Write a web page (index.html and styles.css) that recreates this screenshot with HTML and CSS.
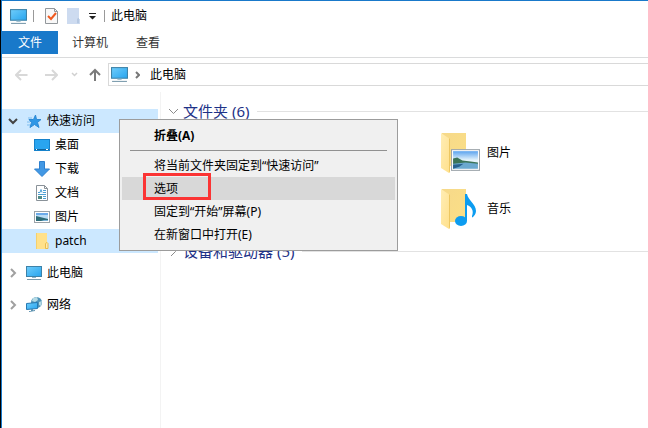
FILE: index.html
```html
<!DOCTYPE html>
<html lang="zh-CN">
<head>
    <meta charset="UTF-8">
    <meta name="viewport" content="width=device-width, initial-scale=1.0">
    <title>此电脑</title>
    <link rel="stylesheet" href="styles.css">
</head>
<body>
    <svg class="sprite" aria-hidden="true">
        <defs>
            <linearGradient id="screen" x1="0" y1="0" x2="1" y2="1">
                <stop offset="0" stop-color="#6fcdfb"/>
                <stop offset="1" stop-color="#27a4ee"/>
            </linearGradient>
            <linearGradient id="paper" x1="0" y1="0" x2="1" y2="1">
                <stop offset="0" stop-color="#f6d98a"/>
                <stop offset="1" stop-color="#fbdf86"/>
            </linearGradient>
            <linearGradient id="flap" x1="0" y1="0" x2="1" y2="1">
                <stop offset="0" stop-color="#ffedb5"/>
                <stop offset="1" stop-color="#ffe08a"/>
            </linearGradient>
            <linearGradient id="sky" x1="0" y1="0" x2="0" y2="1">
                <stop offset="0" stop-color="#5ba3ee"/>
                <stop offset="0.5" stop-color="#e4f3fb"/>
            </linearGradient>
            <symbol id="pc" viewBox="0 0 16 16">
                <rect x="0.5" y="1.5" width="15" height="10" fill="url(#screen)" stroke="#3d82a8"/>
                <path d="M6 12h4v1H6z" fill="#8fb4c8"/>
                <path d="M1 14h14v1H1z" fill="#7899ab"/>
            </symbol>
            <symbol id="photo" viewBox="0 0 28 21">
                <rect x="0.5" y="0.5" width="27" height="20" fill="#fff" stroke="#9ba3a9"/>
                <rect x="2" y="2" width="24" height="17" fill="url(#sky)"/>
                <path d="M2 9l4-1 5 3 8 1 7 1v2H2z" fill="#3b7458"/>
                <path d="M2 14l12-1 12 1v5H2z" fill="#6ba9cf"/>
                <path d="M2 15l10-1-4 3-6 2z" fill="#28628f"/>
            </symbol>
            <symbol id="folder" viewBox="0 0 26 42">
                <path d="M1 1h24v33H9L1 36z" fill="url(#paper)"/>
                <path d="M0 1l9 6v33l-1 1-8-5z" fill="url(#flap)"/>
                <path d="M9 7v32l-1 2V6z" fill="#edc762"/>
            </symbol>
        </defs>
    </svg>

    <div class="window">
        <header class="titlebar">
            <svg class="pc-icon"><use href="#pc"/></svg>
            <span class="divider"></span>
            <button class="tool-btn" aria-label="属性">
                <svg width="13" height="16" viewBox="0 0 13 16">
                    <path d="M0.5 0.5h9l3 3v12h-12z" fill="#f8f8f8" stroke="#92979b"/>
                    <path d="M9.5 0.5v3h3" fill="none" stroke="#92979b"/>
                    <path d="M3 8l3 3 5-6" fill="none" stroke="#ef5a20" stroke-width="2"/>
                </svg>
            </button>
            <button class="tool-btn" aria-label="新建文件夹">
                <svg width="13" height="16" viewBox="0 0 13 16">
                    <path d="M0 0h12v11h1v5H0z" fill="#cddbf0"/>
                    <path d="M10.5 15v-4l1-1v5z" fill="#e3ecf8" stroke="#b5c8e2"/>
                </svg>
            </button>
            <button class="tool-btn small" aria-label="自定义快速访问工具栏">
                <svg width="7" height="7" viewBox="0 0 7 7"><path d="M0 0h7v1H0zM0 3h7L3.5 6.5z" fill="#222"/></svg>
            </button>
            <span class="divider"></span>
            <h1>此电脑</h1>
        </header>

        <nav class="tabs">
            <button class="tab active">文件</button>
            <button class="tab">计算机</button>
            <button class="tab">查看</button>
        </nav>

        <div class="navbar">
            <button class="arrow" aria-label="后退" disabled>
                <svg width="13" height="12" viewBox="0 0 13 12"><path d="M12.5 6H1.5M6 1L1 6l5 5" fill="none" stroke="#d8d8d8" stroke-width="2"/></svg>
            </button>
            <button class="arrow" aria-label="前进" disabled>
                <svg width="13" height="12" viewBox="0 0 13 12"><path d="M0 6h11.5M7 1l5 5-5 5" fill="none" stroke="#d8d8d8" stroke-width="2"/></svg>
            </button>
            <button class="arrow narrow" aria-label="最近浏览的位置" disabled>
                <svg width="7" height="5" viewBox="0 0 7 5"><path d="M1 1l2.5 2.5L6 1" fill="none" stroke="#d0d0d0" stroke-width="1.5"/></svg>
            </button>
            <button class="arrow up" aria-label="上移">
                <svg width="12" height="13" viewBox="0 0 12 13"><path d="M6 13V2M1 7l5-5 5 5" fill="none" stroke="#7b7b7b" stroke-width="2"/></svg>
            </button>
            <div class="address">
                <svg class="pc-icon"><use href="#pc"/></svg>
                <svg width="5" height="8" viewBox="0 0 5 8"><path d="M1 1l3 3-3 3" fill="none" stroke="#777" stroke-width="2"/></svg>
                <span>此电脑</span>
            </div>
        </div>

        <div class="body">
            <aside class="sidebar">
                <a class="root selected" href="#">
                    <svg class="chevron" width="10" height="10" viewBox="0 0 10 10"><path d="M1 3l4 4 4-4" fill="none" stroke="#444" stroke-width="2"/></svg>
                    <svg class="icon" viewBox="0 0 16 16">
                        <path d="M9.5 2l1 4.500H15l-3.500 3 1.500 5-4.500-3-4.500 3 1.500-5L3 6.500h4.500z" fill="#2f97e6" stroke="#2c8ad6"/>
                        <path d="M2 5h4M1 9h3M1 12h3" stroke="#7dbdf0"/>
                    </svg>
                    快速访问
                </a>
                <a class="child" href="#">
                    <svg class="icon" viewBox="0 0 16 16">
                        <rect x="0.5" y="2.5" width="15" height="11" fill="#29a5f0" stroke="#1682cb"/>
                        <path d="M1 12h14v1H1z" fill="#12639b"/>
                        <path d="M2 12h1v1H2zM12 12h2v1h-2z" fill="#fff"/>
                    </svg>
                    桌面
                </a>
                <a class="child" href="#">
                    <svg class="icon" viewBox="0 0 16 16"><path d="M5.5 0.5h5V8h5L8 15.5 0.5 8h5z" fill="#4298e4" stroke="#2d80cf"/></svg>
                    下载
                </a>
                <a class="child" href="#">
                    <svg class="icon" viewBox="0 0 16 16">
                        <path d="M2.5 0.5h8l3 3v12h-11z" fill="#fff" stroke="#8a9299"/>
                        <path d="M10.5 0.5v3h3" fill="none" stroke="#8a9299"/>
                        <path d="M4 7.5h2l1-3 1 3M9 5.5h3M9 7.5h3M4 9.5h8M9 11.5h3M9 13.5h3" fill="none" stroke="#4da0d4"/>
                        <path d="M4 11h4v3H4z" fill="#508b86"/>
                    </svg>
                    文档
                </a>
                <a class="child" href="#">
                    <svg class="icon" viewBox="0 0 16 16">
                        <rect x="0.5" y="2.5" width="15" height="11" fill="#fff" stroke="#9ba3a9"/>
                        <path d="M2 4h12v8H2z" fill="#b9dcf5"/>
                        <path d="M2 4h12v2H2z" fill="#6cabea"/>
                        <path d="M2 7l4 1 8 2v2H2z" fill="#2f6d78"/>
                        <path d="M7 12l3-1h4v1z" fill="#7db4d8"/>
                    </svg>
                    图片
                </a>
                <a class="child selected" href="#">
                    <svg class="icon" viewBox="0 0 16 16">
                        <path d="M2 0h11v9l1 1v6H2z" fill="#ffe18a"/>
                        <path d="M2 0h1v16H2z" fill="#f5d06d"/>
                        <path d="M11.5 15.5v-5l1.5-1 1 1v5z" fill="#ffeab0" stroke="#e9bd4c"/>
                    </svg>
                    patch
                </a>
                <a class="root spaced" href="#">
                    <svg class="chevron" width="10" height="10" viewBox="0 0 10 10"><path d="M3 1l4 4-4 4" fill="none" stroke="#a0a0a0" stroke-width="2"/></svg>
                    <svg class="icon"><use href="#pc"/></svg>
                    此电脑
                </a>
                <a class="root spaced" href="#">
                    <svg class="chevron" width="10" height="10" viewBox="0 0 10 10"><path d="M3 1l4 4-4 4" fill="none" stroke="#a0a0a0" stroke-width="2"/></svg>
                    <svg class="icon" viewBox="0 0 16 16">
                        <circle cx="10.5" cy="5.5" r="5.5" fill="#4f93b8"/>
                        <path d="M7 1l4-1 1 3-3 2-3-1zM13 5l3-1-1 5-2-1z" fill="#b4dae5"/>
                        <path d="M0.5 6.5l11-1v6l-11 1z" fill="url(#screen)" stroke="#2779b2"/>
                        <path d="M5 12h2v2H5zM3 14l6-1v1l-6 1z" fill="#5d92b0"/>
                    </svg>
                    网络
                </a>
            </aside>

            <main class="content">
                <h2>
                    <svg width="11" height="7" viewBox="0 0 11 7"><path d="M1 1l4.5 4.5L10 1" fill="none" stroke="#8b8b8b"/></svg>
                    文件夹 (6)
                </h2>
                <div class="folders">
                    <a class="folder" href="#">
                        <svg width="40" height="42" viewBox="0 0 40 42">
                            <use href="#folder" width="26" height="42"/>
                            <use href="#photo" x="10" y="17" width="29" height="22"/>
                        </svg>
                        图片
                    </a>
                    <a class="folder" href="#">
                        <svg width="40" height="42" viewBox="0 0 40 42">
                            <use href="#folder" width="26" height="42"/>
                            <ellipse cx="20" cy="33" rx="6" ry="5" fill="#0c9cf0"/>
                            <path d="M24 6h2c1 6 9 10 9 17 0 3-2 5-3 6-1 1-1 0-1-1 2-5 0-9-5-11v16h-2z" fill="#0c9cf0"/>
                        </svg>
                        音乐
                    </a>
                </div>
                <h2>
                    <svg width="11" height="11" viewBox="0 0 11 11"><path d="M3 1l4.5 4.5L3 10" fill="none" stroke="#8b8b8b"/></svg>
                    设备和驱动器 (5)
                </h2>
            </main>
        </div>

        <!-- 右键菜单 -->
        <div class="context-menu" role="menu">
            <button class="default" role="menuitem">折叠(A)</button>
            <hr>
            <button role="menuitem">将当前文件夹固定到“快速访问”</button>
            <button class="hover" role="menuitem">选项<span class="marker"></span></button>
            <button role="menuitem">固定到“开始”屏幕(P)</button>
            <button role="menuitem">在新窗口中打开(E)</button>
        </div>
    </div>
</body>
</html>
```
FILE: styles.css
```css
* {
    box-sizing: border-box;
}
body {
    margin: 0;
    padding-left: 1px;
    background: #000;
    color: #000;
    font-family: "Noto Sans", "Noto Sans CJK SC", sans-serif;
    font-size: 12px;
    line-height: 16px;
}
button {
    font: inherit;
    color: inherit;
    background: none;
    border: none;
    padding: 0;
}
a {
    color: inherit;
    text-decoration: none;
}
svg {
    display: block;
    flex: none;
}
.sprite {
    position: absolute;
    width: 0;
    height: 0;
}
.window {
    position: relative;
    display: flex;
    flex-direction: column;
    min-height: 100vh;
    background: white;
    border-top: 1px solid #1979ca;
    border-left: 1px solid #1979ca;
    overflow: hidden;
}
.icon {
    width: 16px;
    height: 16px;
}
.pc-icon {
    width: 17px;
    height: 17px;
}

/* 标题栏 */
.titlebar {
    display: flex;
    align-items: center;
    height: 30px;
    padding-left: 8px;
}
.divider {
    width: 1px;
    height: 12px;
    margin: 0 11px 0 6px;
    background: #999;
}
.tool-btn {
    margin-right: 9px;
}
.tool-btn.small {
    margin-right: 2px;
}
.tool-btn + .divider {
    margin-right: 6px;
}
h1 {
    margin: 0;
    font-size: 12px;
    font-weight: normal;
}

/* 选项卡 */
.tabs {
    display: flex;
    height: 27px;
    border-bottom: 1px solid #dadbdc;
}
.tab {
    height: 23px;
    padding: 0 14px;
    color: #333;
}
.tab.active {
    padding: 0 16px;
    background: #1979ca;
    color: white;
}

/* 地址栏 */
.navbar {
    display: flex;
    align-items: center;
    padding: 5px 0 0 13px;
}
.arrow {
    margin-right: 17px;
}
.arrow.narrow {
    margin: 0 11px 0 -4px;
}
.arrow.up {
    margin-right: 7px;
}
.address {
    display: flex;
    flex: 1;
    align-items: center;
    height: 23px;
    padding-left: 2px;
    border: 1px solid #d9d9d9;
    border-right: none;
    gap: 7px;
}
.address span {
    margin-left: 3px;
}

/* 导航窗格和内容 */
.body {
    display: flex;
    flex: 1;
    padding-top: 6px;
}
.sidebar {
    width: 159px;
    padding-top: 17px;
    padding-right: 2px;
    border-right: 1px solid #f3f3f3;
}
.sidebar a {
    display: flex;
    align-items: center;
    height: 24px;
    gap: 5px;
}
.sidebar .root {
    padding-left: 6px;
}
.sidebar .child {
    padding-left: 32px;
}
.sidebar .chevron {
    margin-right: 3px;
}
.sidebar .spaced {
    margin-top: 8px;
}
.sidebar .selected {
    background: #cce8ff;
}
.content {
    flex: 1;
    padding: 9px 0 0 7px;
}
h2 {
    display: flex;
    align-items: center;
    height: 20px;
    margin: 0;
    gap: 4px;
    color: #1e3287;
    font-size: 15px;
    font-weight: normal;
    line-height: 20px;
}
h2 svg {
    width: 11px;
}
h2::after {
    content: "";
    flex: 1;
    height: 1px;
    margin-left: 4px;
    background: #e2e2e2;
}
.folders {
    display: grid;
    grid-template-columns: 273px 1fr;
    grid-auto-rows: 56px;
    padding: 4px 0;
}
.folder {
    grid-column: 2;
    display: flex;
    align-items: center;
    gap: 6px;
}

/* 右键菜单 */
.context-menu {
    position: absolute;
    top: 118px;
    left: 117px;
    width: 279px;
    padding: 4px 2px;
    background: #f0f0f0;
    border: 1px solid #9c9c9c;
}
.context-menu button {
    position: relative;
    display: block;
    width: 100%;
    height: 23px;
    padding-left: 32px;
    text-align: left;
}
.context-menu .default {
    font-weight: bold;
}
.context-menu .hover {
    background: #d8d8d8;
}
.context-menu hr {
    height: 1px;
    margin: 3px 8px;
    border: none;
    background: #919191;
}
.marker {
    position: absolute;
    top: -4px;
    left: 21px;
    width: 68px;
    height: 27px;
    border: 3px solid #fb3434;
}
```
